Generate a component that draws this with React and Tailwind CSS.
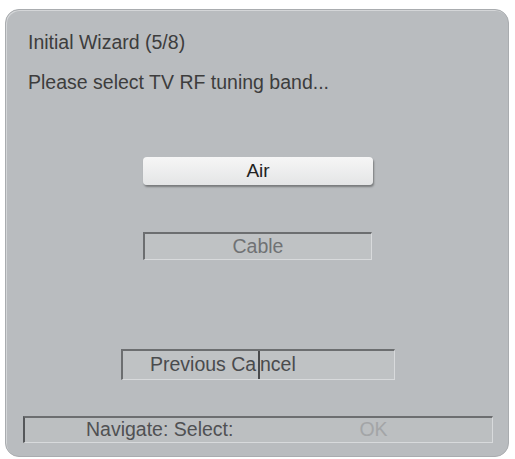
export default function App() {
  return (
    <div className="h-[459px] w-[515px] bg-white pl-[5px] pt-[9px] font-['Liberation_Sans',Arial,sans-serif]">
      <div className="flex h-[448px] w-[504px] flex-col rounded-[14px] border border-[#a9acaf] bg-[#b9bcbf] shadow-[inset_1px_1px_0_#d4d6d8]">
        <p className="ml-[22px] mt-[21px] text-[19.5px] leading-[22px] text-[#3d3d3d]">Initial Wizard (5/8)</p>
        <p className="ml-[22px] mt-[18px] text-[19.5px] leading-[22px] text-[#3d3d3d]">Please select TV RF tuning band...</p>

        <div className="ml-[137px] mt-[64px] flex h-[28px] w-[230px] items-center justify-center rounded-[4px] bg-[linear-gradient(#f6f6f6,#e4e5e6)] text-[19px] text-[#222] shadow-[1px_2px_2px_rgba(0,0,0,0.35)]">
          Air
        </div>

        <div className="ml-[137px] mt-[47px] flex h-[28px] w-[229px] items-center justify-center border-l-2 border-t-2 border-b border-r border-l-[#6c6e70] border-t-[#6c6e70] border-b-[#d8dadc] border-r-[#d8dadc] bg-[#bfc2c4] text-[19.5px] text-[#707274]">
          Cable
        </div>

        <div className="ml-[115px] mt-[89px] flex h-[31px] w-[274px] border-l-2 border-t-2 border-b border-r border-l-[#6c6e70] border-t-[#6c6e70] border-b-[#d8dadc] border-r-[#d8dadc] bg-[#bfc2c4]">
          <div className="flex w-[135px] items-center pl-[27px] text-[19.5px] text-[#4a4b4d]">
            <span className="whitespace-nowrap">Previous Ca</span>
          </div>
          <div className="flex flex-1 items-center border-l-2 border-l-[#4a4b4d] text-[19.5px] text-[#4a4b4d]">
            <span>ncel</span>
          </div>
        </div>

        <div className="ml-[17px] mt-[36px] flex h-[27px] w-[470px] items-center border-l-2 border-t-2 border-b border-r border-l-[#55575a] border-t-[#6c6e70] border-b-[#d8dadc] border-r-[#d8dadc] bg-[#bcbfc1] text-[19.5px]">
          <span className="ml-[61px] whitespace-nowrap text-[#505153]">Navigate: Select:</span>
          <span className="ml-[126px] text-[#a3a5a7]">OK</span>
        </div>
      </div>
    </div>
  )
}
